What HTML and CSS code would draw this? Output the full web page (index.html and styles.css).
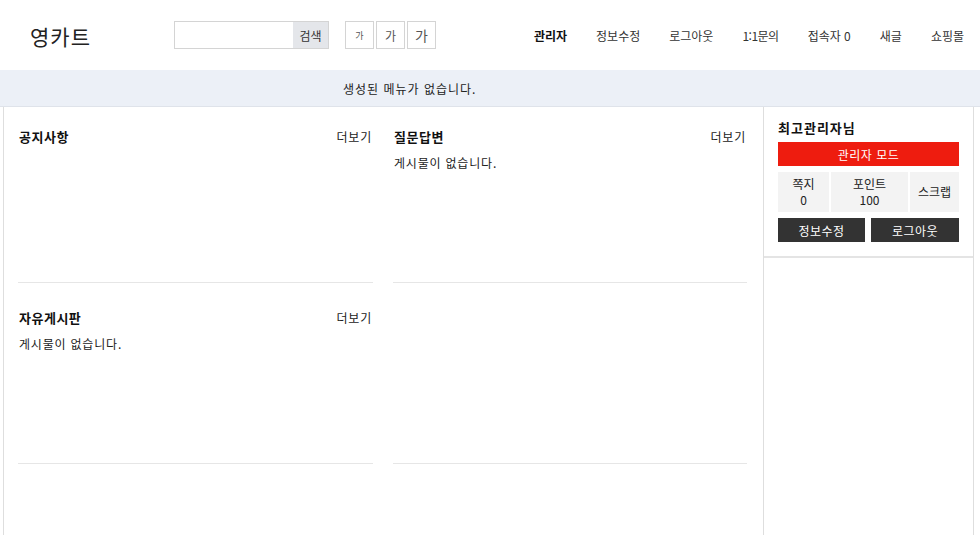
FILE: index.html
```html
<!DOCTYPE html>
<html lang="ko">
<head>
<meta charset="utf-8">
<title>영카트</title>
<link rel="stylesheet" href="styles.css">
</head>
<body>
<header class="hd">
  <div class="logo">영카트</div>
  <form class="search">
    <input class="search-input" type="text">
    <button class="search-btn" type="button">검색</button>
  </form>
  <div class="font-size">
    <button class="fs fs-s" type="button">가</button>
    <button class="fs fs-m" type="button">가</button>
    <button class="fs fs-l" type="button">가</button>
  </div>
  <nav class="tnb">
    <a class="tnb-admin">관리자</a>
    <a>정보수정</a>
    <a>로그아웃</a>
    <a class="tnb-qa">1:1문의</a>
    <a>접속자 0</a>
    <a>새글</a>
    <a>쇼핑몰</a>
  </nav>
</header>
<div class="gnb"><span class="gnb-empty">생성된 메뉴가 없습니다.</span></div>
<div class="wrap">
  <main class="container">
    <section class="board">
      <div class="board-hd"><h2 class="board-title">공지사항</h2><a class="more">더보기</a></div>
      <ul class="board-list"></ul>
    </section>
    <section class="board">
      <div class="board-hd"><h2 class="board-title">질문답변</h2><a class="more">더보기</a></div>
      <ul class="board-list"><li class="empty">게시물이 없습니다.</li></ul>
    </section>
    <section class="board">
      <div class="board-hd"><h2 class="board-title">자유게시판</h2><a class="more">더보기</a></div>
      <ul class="board-list"><li class="empty">게시물이 없습니다.</li></ul>
    </section>
    <section class="board board-blank"></section>
  </main>
  <aside class="aside">
    <div class="ol">
      <h2 class="ol-name">최고관리자님</h2>
      <a class="ol-admin">관리자 모드</a>
      <ul class="ol-stats">
        <li class="stat stat-memo"><span>쪽지</span><span>0</span></li>
        <li class="stat stat-point"><span>포인트</span><span>100</span></li>
        <li class="stat stat-scrap"><span>스크랩</span></li>
      </ul>
      <div class="ol-btns">
        <a class="ol-btn ol-btn-info">정보수정</a>
        <a class="ol-btn ol-btn-out">로그아웃</a>
      </div>
    </div>
    <div class="aside-rest"></div>
  </aside>
</div>
</body>
</html>
```

FILE: styles.css
```css
* { box-sizing: border-box; }
html, body { margin: 0; padding: 0; }
body {
  font-family: "Noto Sans CJK KR", "Noto Sans", "DejaVu Sans", sans-serif;
  font-size: 12px;
  color: #111;
  background: #fff;
  height: 535px;
  display: flex;
  flex-direction: column;
  overflow: hidden;
}
a { color: inherit; text-decoration: none; }
ul { list-style: none; margin: 0; padding: 0; }
h2 { margin: 0; }

.hd {
  height: 70px;
  display: flex;
  align-items: center;
  flex: 0 0 70px;
}
.logo {
  margin-left: 30px;
  width: 144px;
  font-size: 21px;
  color: #222;
  line-height: 24px;
  letter-spacing: 1px;
  padding-top: 2px;
}
.search {
  display: flex;
  width: 155px;
  height: 28px;
  border: 1px solid #d4d4d4;
  margin: 0;
}
.search-input {
  flex: 1;
  min-width: 0;
  border: 0;
  padding: 0 6px;
  outline: none;
  background: #fff;
}
.search-btn {
  width: 35px;
  border: 0;
  background: #e4e6ea;
  font-family: inherit;
  font-size: 12px;
  color: #333;
  padding: 0;
}
.font-size {
  display: flex;
  gap: 2px;
  margin-left: 16px;
}
.fs {
  width: 29px;
  height: 28px;
  border: 1px solid #d4d4d4;
  background: #fff;
  color: #555;
  font-family: inherit;
  padding: 0;
}
.fs-s { font-size: 9px; }
.fs-m { font-size: 12px; }
.fs-l { font-size: 14px; }
.tnb {
  margin-left: auto;
  padding-right: 16px;
  display: flex;
  gap: 29px;
  color: #333;
  font-size: 12px;
}
.tnb-admin { font-weight: bold; color: #111; }
.tnb-qa { letter-spacing: -0.5px; }

.gnb {
  flex: 0 0 37px;
  height: 37px;
  background: #ecf0f7;
  border-bottom: 1px solid #dfe3ea;
  display: flex;
  align-items: center;
  padding-left: 343px;
  color: #222;
}
.gnb-empty { letter-spacing: 1px; }

.wrap {
  flex: 1;
  display: flex;
  align-items: stretch;
}
.container {
  flex: 0 0 760px;
  margin-left: 3px;
  border-left: 1px solid #dedede;
  padding: 19px 16px 0 14px;
  display: grid;
  grid-template-columns: 355px 354px;
  column-gap: 20px;
  align-content: start;
}
.board {
  height: 157px;
  margin-bottom: 24px;
  border-bottom: 1px solid #e6e6e6;
}
.board-hd {
  display: flex;
  justify-content: space-between;
  align-items: center;
  height: 20px;
}
.board-title {
  font-size: 13px;
  font-weight: bold;
  color: #111;
  padding-left: 1px;
  letter-spacing: 0.5px;
}
.more {
  color: #222;
  padding-right: 1px;
  letter-spacing: 0.8px;
}
.board-list {
  margin-top: 7px;
  line-height: 20px;
  color: #222;
}
.empty { padding-left: 1px; letter-spacing: 0.8px; }

.aside {
  flex: 0 0 211px;
  border-left: 1px solid #dedede;
  border-right: 1px solid #dedede;
  display: flex;
  flex-direction: column;
}
.ol {
  padding: 11px 14px 14px 14px;
  border-bottom: 2px solid #e4e4e4;
}
.ol-name {
  font-size: 13px;
  font-weight: bold;
  line-height: 20px;
  margin-bottom: 4px;
  color: #111;
  letter-spacing: 1px;
}
.ol-admin {
  display: flex;
  align-items: center;
  justify-content: center;
  height: 24px;
  background: #ee1c0f;
  color: #fff;
  font-size: 12px;
  letter-spacing: 0.5px;
}
.ol-stats {
  display: flex;
  gap: 2px;
  margin-top: 6px;
  height: 40px;
}
.stat {
  background: #f3f3f3;
  display: flex;
  flex-direction: column;
  align-items: center;
  justify-content: center;
  line-height: 16px;
  color: #222;
}
.stat-memo { width: 51px; }
.stat-point { width: 77px; }
.stat-scrap { flex: 1; }
.ol-btns {
  display: flex;
  justify-content: space-between;
  margin-top: 6px;
}
.ol-btn {
  height: 24px;
  background: #333;
  color: #fff;
  display: flex;
  align-items: center;
  justify-content: center;
  font-size: 12px;
  letter-spacing: 0.5px;
}
.ol-btn-info { width: 87px; }
.ol-btn-out { width: 88px; }
.aside-rest { flex: 1; }
```
